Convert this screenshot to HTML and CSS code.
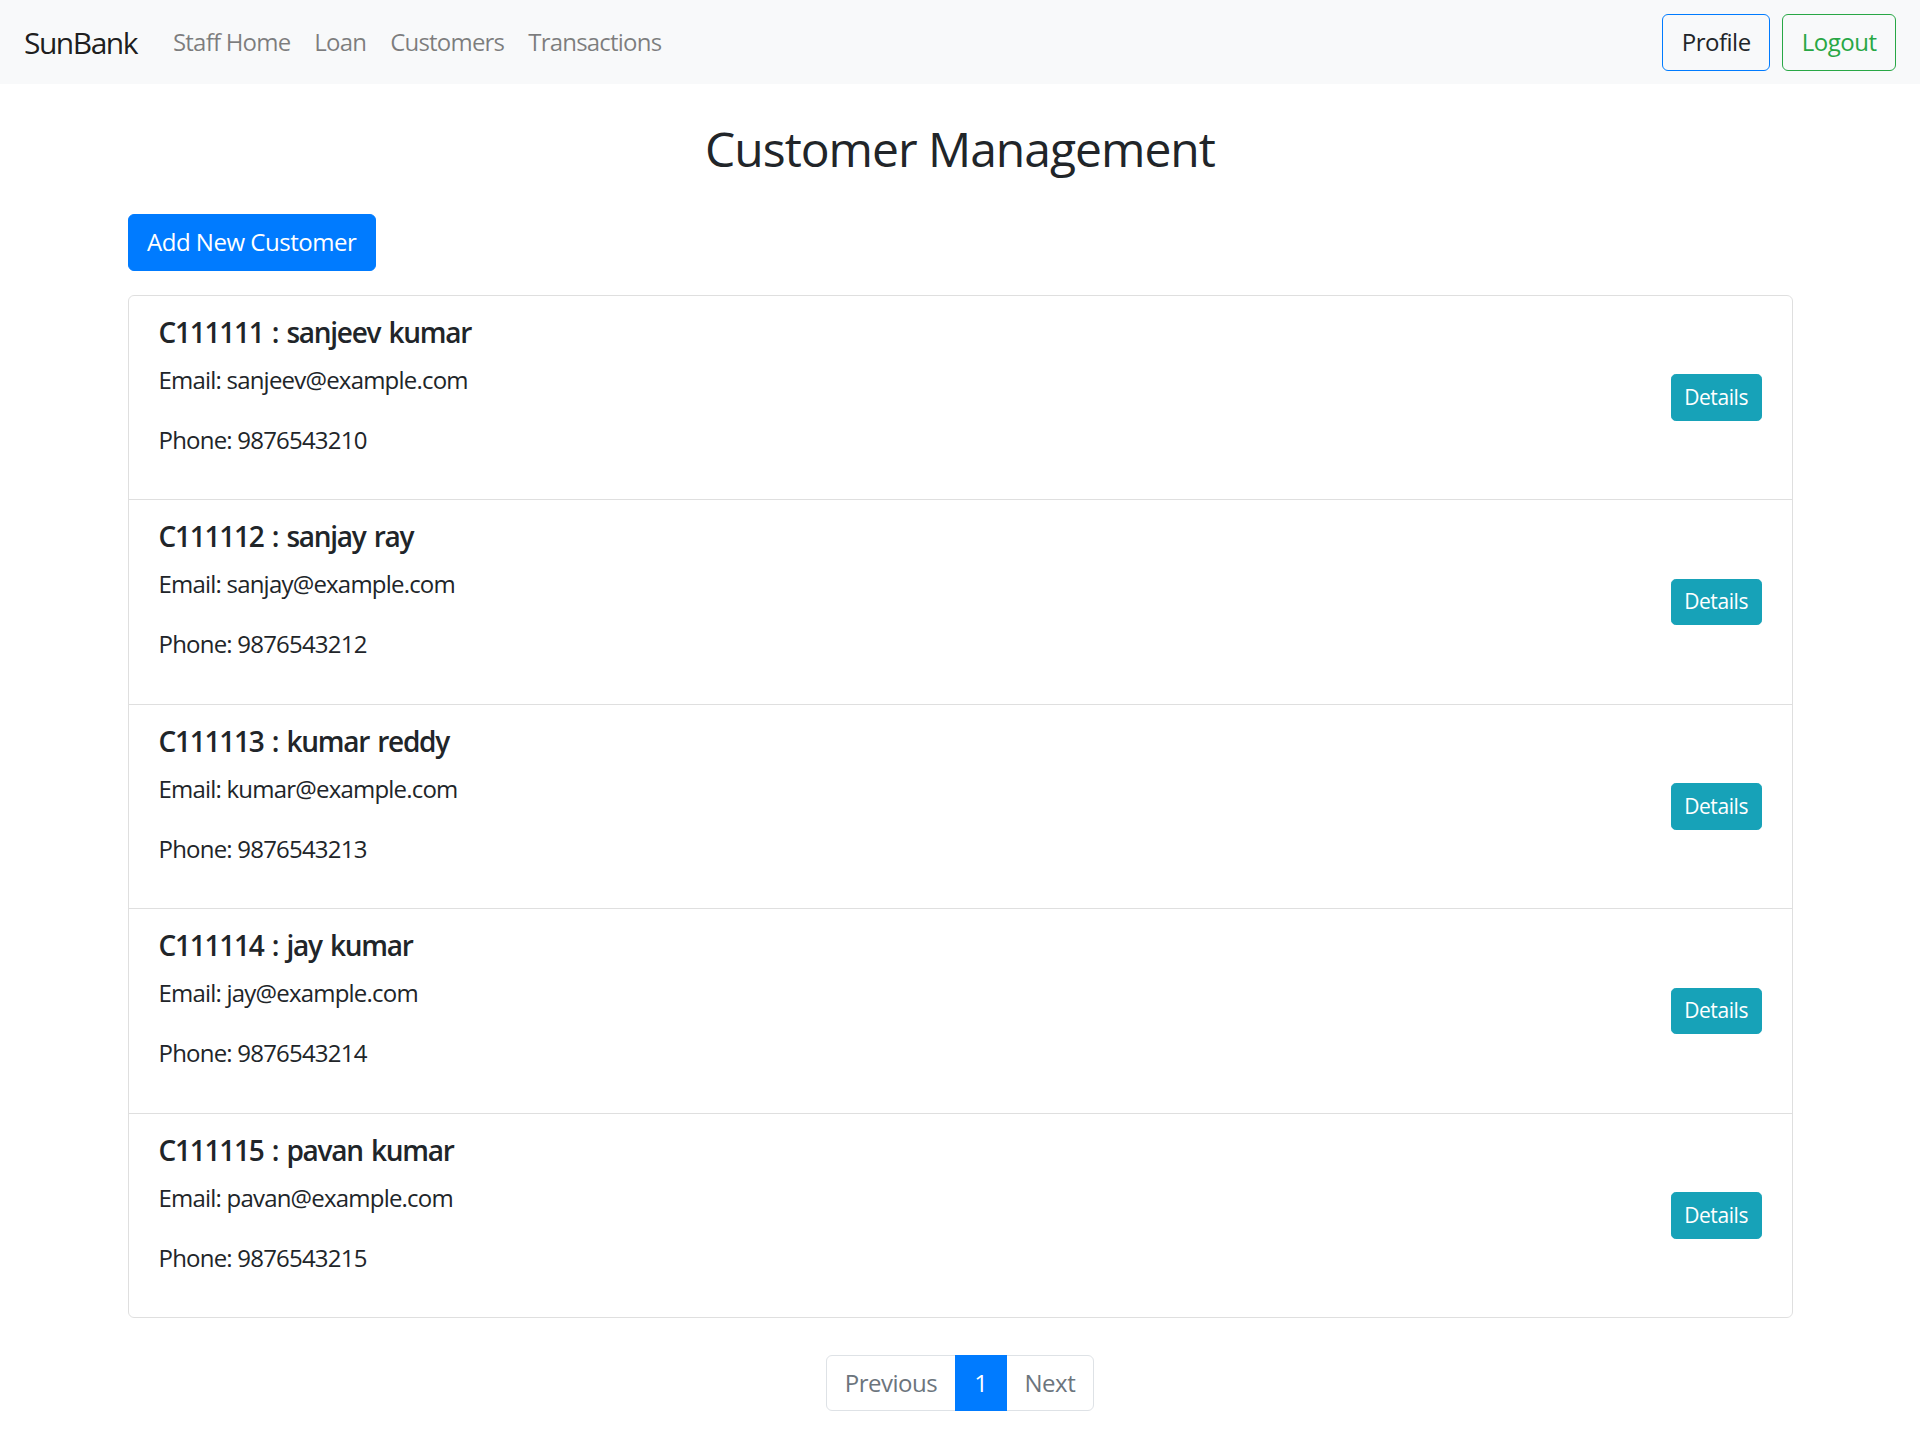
FILE: index.html
```html
<!DOCTYPE html>
<html lang="en">
<head>
<meta charset="utf-8">
<title>SunBank - Customer Management</title>
<link rel="stylesheet" href="styles.css">
</head>
<body>
<nav class="navbar">
  <a class="brand" href="#">SunBank</a>
  <ul class="nav">
    <li><a class="nav-link" href="#">Staff Home</a></li>
    <li><a class="nav-link" href="#">Loan</a></li>
    <li><a class="nav-link" href="#">Customers</a></li>
    <li><a class="nav-link" href="#">Transactions</a></li>
  </ul>
  <div class="nav-actions">
    <a class="btn btn-outline-primary" href="#">Profile</a>
    <a class="btn btn-outline-success" href="#">Logout</a>
  </div>
</nav>

<main class="container">
  <h2 class="page-title">Customer Management</h2>
  <a class="btn btn-primary add-btn" href="#">Add New Customer</a>

  <ul class="list-group">
    <li class="list-group-item">
      <div class="info">
        <h5 class="cust-name">C111111 : sanjeev kumar</h5>
        <p>Email: sanjeev@example.com</p>
        <p>Phone: 9876543210</p>
      </div>
      <a class="btn btn-info btn-sm" href="#">Details</a>
    </li>
    <li class="list-group-item">
      <div class="info">
        <h5 class="cust-name">C111112 : sanjay ray</h5>
        <p>Email: sanjay@example.com</p>
        <p>Phone: 9876543212</p>
      </div>
      <a class="btn btn-info btn-sm" href="#">Details</a>
    </li>
    <li class="list-group-item">
      <div class="info">
        <h5 class="cust-name">C111113 : kumar reddy</h5>
        <p>Email: kumar@example.com</p>
        <p>Phone: 9876543213</p>
      </div>
      <a class="btn btn-info btn-sm" href="#">Details</a>
    </li>
    <li class="list-group-item">
      <div class="info">
        <h5 class="cust-name">C111114 : jay kumar</h5>
        <p>Email: jay@example.com</p>
        <p>Phone: 9876543214</p>
      </div>
      <a class="btn btn-info btn-sm" href="#">Details</a>
    </li>
    <li class="list-group-item">
      <div class="info">
        <h5 class="cust-name">C111115 : pavan kumar</h5>
        <p>Email: pavan@example.com</p>
        <p>Phone: 9876543215</p>
      </div>
      <a class="btn btn-info btn-sm" href="#">Details</a>
    </li>
  </ul>

  <ul class="pagination">
    <li class="page-item disabled"><span class="page-link">Previous</span></li>
    <li class="page-item active"><span class="page-link">1</span></li>
    <li class="page-item disabled"><span class="page-link">Next</span></li>
  </ul>
</main>
</body>
</html>
```
FILE: styles.css
```css
* { box-sizing: border-box; }

body {
  margin: 0;
  font-family: "Open Sans", "Noto Sans", sans-serif;
  font-size: 24px;
  line-height: 36px;
  letter-spacing: -0.033em;
  color: #212529;
  background: #fff;
}

a { text-decoration: none; }

/* Navbar */
.navbar {
  display: flex;
  align-items: center;
  height: 84px;
  padding: 12px 24px;
  background: #f8f9fa;
}
.brand {
  font-size: 30px;
  line-height: 45px;
  padding: 7.5px 0;
  margin-right: 24px;
  letter-spacing: -0.05em;
  color: rgba(0, 0, 0, 0.9);
}
.nav {
  display: flex;
  list-style: none;
  margin: 0;
  padding: 0;
}
.nav-link {
  display: block;
  padding: 12px 12px;
  letter-spacing: -0.033em;
  color: rgba(0, 0, 0, 0.5);
}
.nav-actions {
  margin-left: auto;
  display: flex;
  gap: 12px;
}

/* Buttons */
.btn {
  display: inline-block;
  font-size: 24px;
  line-height: 36px;
  padding: 9.5px 18.5px;
  border: 1px solid transparent;
  border-radius: 6px;
  text-align: center;
  white-space: nowrap;
  letter-spacing: -0.02em;
}
.btn-outline-primary {
  border-color: #007bff;
  color: #212529;
}
.btn-outline-success {
  border-color: #28a745;
  color: #28a745;
}
.btn-primary {
  background: #007bff;
  border-color: #007bff;
  color: #fff;
}
.btn-info {
  background: #17a2b8;
  border-color: #17a2b8;
  color: #fff;
}
.btn-sm {
  font-size: 21px;
  line-height: 31.5px;
  padding: 6.5px 12.5px;
  border-radius: 4.8px;
}

/* Content */
.container {
  width: 1665px;
  margin: 36px auto 0;
}
.page-title {
  margin: 0 0 36px;
  text-align: center;
  font-size: 48px;
  line-height: 57.6px;
  font-weight: 400;
  letter-spacing: -0.021em;
}
.add-btn {
  margin-bottom: 24px;
}

.list-group {
  list-style: none;
  margin: 0;
  padding: 0;
  border: 1px solid rgba(0, 0, 0, 0.125);
  border-radius: 6px;
}
.list-group-item {
  display: flex;
  justify-content: space-between;
  align-items: center;
  padding: 18px 30px 17.5px;
}
.list-group-item + .list-group-item {
  border-top: 1px solid rgba(0, 0, 0, 0.125);
}
.cust-name {
  margin: 0 0 12px;
  font-size: 28px;
  line-height: 36px;
  font-weight: 600;
  letter-spacing: -0.045em;
  word-spacing: 0.08em;
}
.info p {
  margin: 0 0 24px;
}

/* Pagination */
.pagination {
  display: flex;
  justify-content: center;
  list-style: none;
  margin: 37px 0 24px;
  padding: 0;
}
.page-link {
  display: block;
  padding: 12px 18px;
  line-height: 30px;
  margin-left: -1px;
  border: 1px solid #dee2e6;
  background: #fff;
  color: #6c757d;
  letter-spacing: -0.02em;
}
.page-item:first-child .page-link {
  margin-left: 0;
  border-radius: 6px 0 0 6px;
}
.page-item:last-child .page-link {
  border-radius: 0 6px 6px 0;
}
.page-item.active .page-link {
  background: #007bff;
  border-color: #007bff;
  color: #fff;
  position: relative;
  z-index: 1;
}
```
